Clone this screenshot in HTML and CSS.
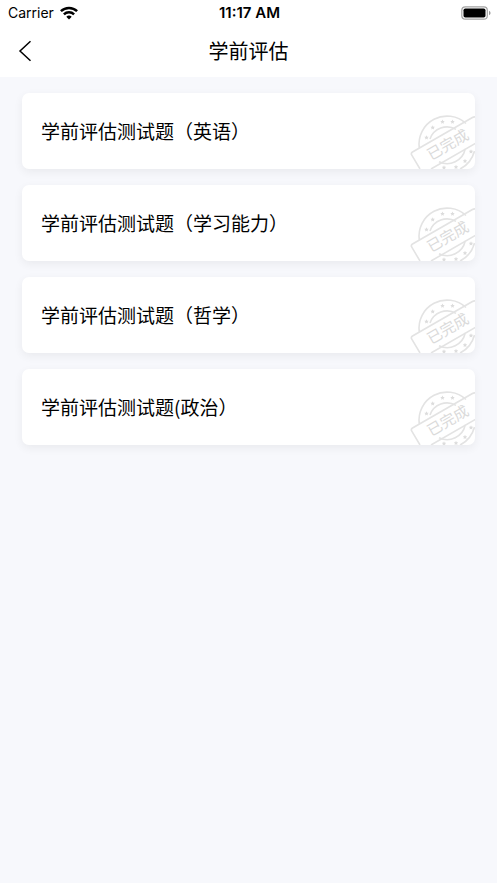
FILE: index.html
```html
<!DOCTYPE html>
<html lang="zh-CN">
<head>
<meta charset="utf-8">
<meta name="viewport" content="width=device-width, initial-scale=1">
<title>学前评估</title>
<link rel="stylesheet" href="styles.css">
</head>
<body>
<svg class="defs" aria-hidden="true">
  <defs>
    <path id="star" d="M0-2.200 .7-.8 2.200-.7 1.100 .5 1.400 2 0 1.200-1.400 2-1.100 .5-2.200-.7-.7-.8Z"/>
    <symbol id="stamp" viewBox="0 0 65 56">
      <g fill="none" stroke="#e3e3e3" stroke-width="1.600">
        <path d="M9.300 35A28 28 0 0 1 56 10.500"/>
        <path d="M20 26A18 18 0 0 1 46 16.400"/>
        <path d="M29 48.700A18.500 18.500 0 0 0 55.200 36"/>
        <path d="M50 56A28 28 0 0 0 64.500 38"/>
        <path d="M66 4Q64 3.500 62 4.700L2.500 39Q.6 40.200 1.800 42.200L10 56M21 56L66 30"/>
      </g>
      <g fill="#dcdcdc">
        <use href="#star" x="16.500" y="24.500"/>
        <use href="#star" x="22.700" y="14.500"/>
        <use href="#star" x="32.500" y="8.800"/>
        <use href="#star" x="42.500" y="8.800"/>
        <use href="#star" x="34" y="54.500"/>
        <use href="#star" x="46" y="54"/>
        <use href="#star" x="55" y="48"/>
        <use href="#star" x="61" y="38.500"/>
      </g>
      <text class="stamp-text" x="38" y="37" text-anchor="middle" transform="rotate(-30 38 32)">已完成</text>
    </symbol>
  </defs>
</svg>
<header class="top">
  <div class="status">
    <div class="carrier">
      <span>Carrier</span>
      <svg width="18" height="14" viewBox="0 0 18 14" aria-hidden="true">
        <g fill="none" stroke="#000" stroke-width="2.500">
          <path d="M.9 5.200A11.700 11.700 0 0 1 17.100 5.200"/>
          <path d="M3.900 8.300A7.400 7.400 0 0 1 14.100 8.300"/>
        </g>
        <path d="M9 13.500 6.300 10.800A3.900 3.900 0 0 1 11.700 10.800Z"/>
      </svg>
    </div>
    <div class="time">11:17 AM</div>
    <svg class="battery" width="30" height="14" viewBox="0 0 30 14" aria-hidden="true">
      <rect x=".8" y=".8" width="25.500" height="12.400" rx="3.500" fill="none" stroke="#a3a3a3" stroke-width="1.200"/>
      <rect x="2.500" y="2.500" width="22" height="9" rx="1.800"/>
      <path d="M28 4.800Q29.600 5.500 29.600 7T28 9.200Z" fill="#999"/>
    </svg>
  </div>
  <nav class="bar">
    <button class="back" type="button" aria-label="返回">
      <svg width="14" height="22" viewBox="0 0 14 22" aria-hidden="true"><path d="M12.500 1.200 2 11 12.500 20.800" fill="none" stroke="#000" stroke-width="1.500"/></svg>
    </button>
    <h1>学前评估</h1>
  </nav>
</header>
<main class="list">
  <a class="card" href="#"><span>学前评估测试题（英语）</span><svg class="stamp"><use href="#stamp"/></svg></a>
  <a class="card" href="#"><span>学前评估测试题（学习能力）</span><svg class="stamp"><use href="#stamp"/></svg></a>
  <a class="card" href="#"><span>学前评估测试题（哲学）</span><svg class="stamp"><use href="#stamp"/></svg></a>
  <a class="card" href="#"><span>学前评估测试题(政治）</span><svg class="stamp"><use href="#stamp"/></svg></a>
</main>
</body>
</html>
```
FILE: styles.css
```css
* {
  box-sizing: border-box;
}

body {
  margin: 0;
  min-height: 100vh;
  background: #f7f8fc;
  color: #000;
  font-family: Inter, "Noto Sans CJK SC", sans-serif;
}

.defs {
  position: absolute;
  width: 0;
  height: 0;
}

.top {
  background: #fff;
}

.status {
  display: grid;
  grid-template-columns: 1fr auto 1fr;
  align-items: center;
  height: 25px;
  padding: 0 6px 0 8px;
  font-size: 14px;
}

.carrier {
  display: flex;
  align-items: center;
  gap: 6px;
}

.time {
  font-size: 15px;
  font-weight: 600;
}

.battery {
  justify-self: end;
}

.bar {
  display: grid;
  grid-template-columns: 52px 1fr 52px;
  align-items: center;
  height: 52px;
}

.back {
  display: flex;
  padding: 0 0 0 18px;
  border: 0;
  background: none;
}

h1 {
  margin: 0;
  font-size: 20px;
  line-height: 28px;
  font-weight: 400;
  text-align: center;
  font-family: "Noto Sans CJK SC", sans-serif;
}

.list {
  display: flex;
  flex-direction: column;
  gap: 16px;
  padding: 16px 22px;
}

.card {
  display: flex;
  align-items: center;
  justify-content: space-between;
  min-height: 76px;
  padding-left: 19px;
  overflow: hidden;
  border-radius: 7px;
  background: #fff;
  box-shadow: 0 3px 10px rgba(0, 0, 0, 0.06);
  color: #000;
  font-family: "Noto Sans CJK SC", sans-serif;
  font-size: 19px;
  line-height: 28px;
  text-decoration: none;
}

.stamp {
  flex: none;
  align-self: flex-end;
  width: 65px;
  height: 56px;
}

.stamp-text {
  fill: #dadada;
  font-size: 15px;
}
```
